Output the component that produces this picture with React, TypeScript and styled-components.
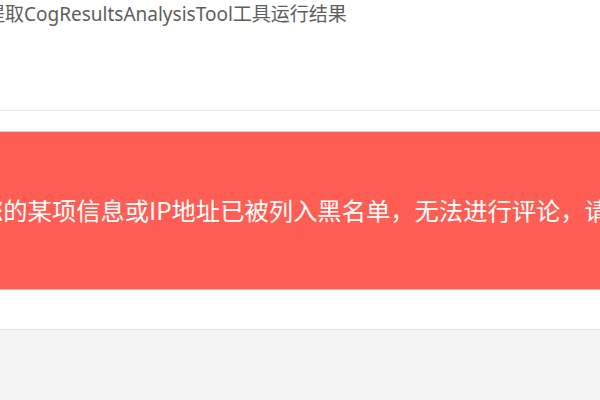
import React from "react";
import styled, { createGlobalStyle } from "styled-components";

const Global = createGlobalStyle`
  html, body { margin: 0; padding: 0; background: #f4f4f4; }
  body { font-family: "Noto Sans", "Noto Sans CJK SC", sans-serif; overflow: hidden; }
  #root { width: 600px; height: 400px; overflow: hidden; }
`;

const Page = styled.div`
  width: 600px;
  height: 400px;
  display: flex;
  flex-direction: column;
  background: #f4f4f4;
  overflow: hidden;
`;

const Header = styled.header`
  height: 110px;
  background: #ffffff;
  border-bottom: 1px solid #e6e6e6;
  box-shadow: 0 1px 1px rgba(0, 0, 0, 0.04);
  overflow: hidden;
`;

const Title = styled.h1`
  margin: 1px 0 0 -14px;
  font-size: 19px;
  font-weight: 400;
  line-height: 26px;
  color: #5e5e5e;
  white-space: nowrap;
  font-family: "Noto Sans", "Noto Sans CJK SC", sans-serif;
`;

const Section = styled.section`
  background: #ffffff;
  padding: 20px 0 39px;
  border-bottom: 1px solid #e2e2e2;
`;

const Alert = styled.div`
  height: 157px;
  background: #ff5e54;
  border-top: 1px solid #d9d0cf;
  border-bottom: 1px solid #ffa9a3;
  display: flex;
  align-items: center;
  overflow: hidden;
`;

const AlertText = styled.p`
  margin: -2px 0 0 -21px;
  font-size: 24.3px;
  line-height: 32px;
  color: #ffffff;
  white-space: nowrap;
  font-family: "Noto Sans CJK SC", sans-serif;
`;

export default function App() {
  return (
    <>
      <Global />
      <Page>
        <Header>
          <Title>提取CogResultsAnalysisTool工具运行结果</Title>
        </Header>
        <Section>
          <Alert>
            <AlertText>您的某项信息或IP地址已被列入黑名单，无法进行评论，请联系管理员</AlertText>
          </Alert>
        </Section>
      </Page>
    </>
  );
}
